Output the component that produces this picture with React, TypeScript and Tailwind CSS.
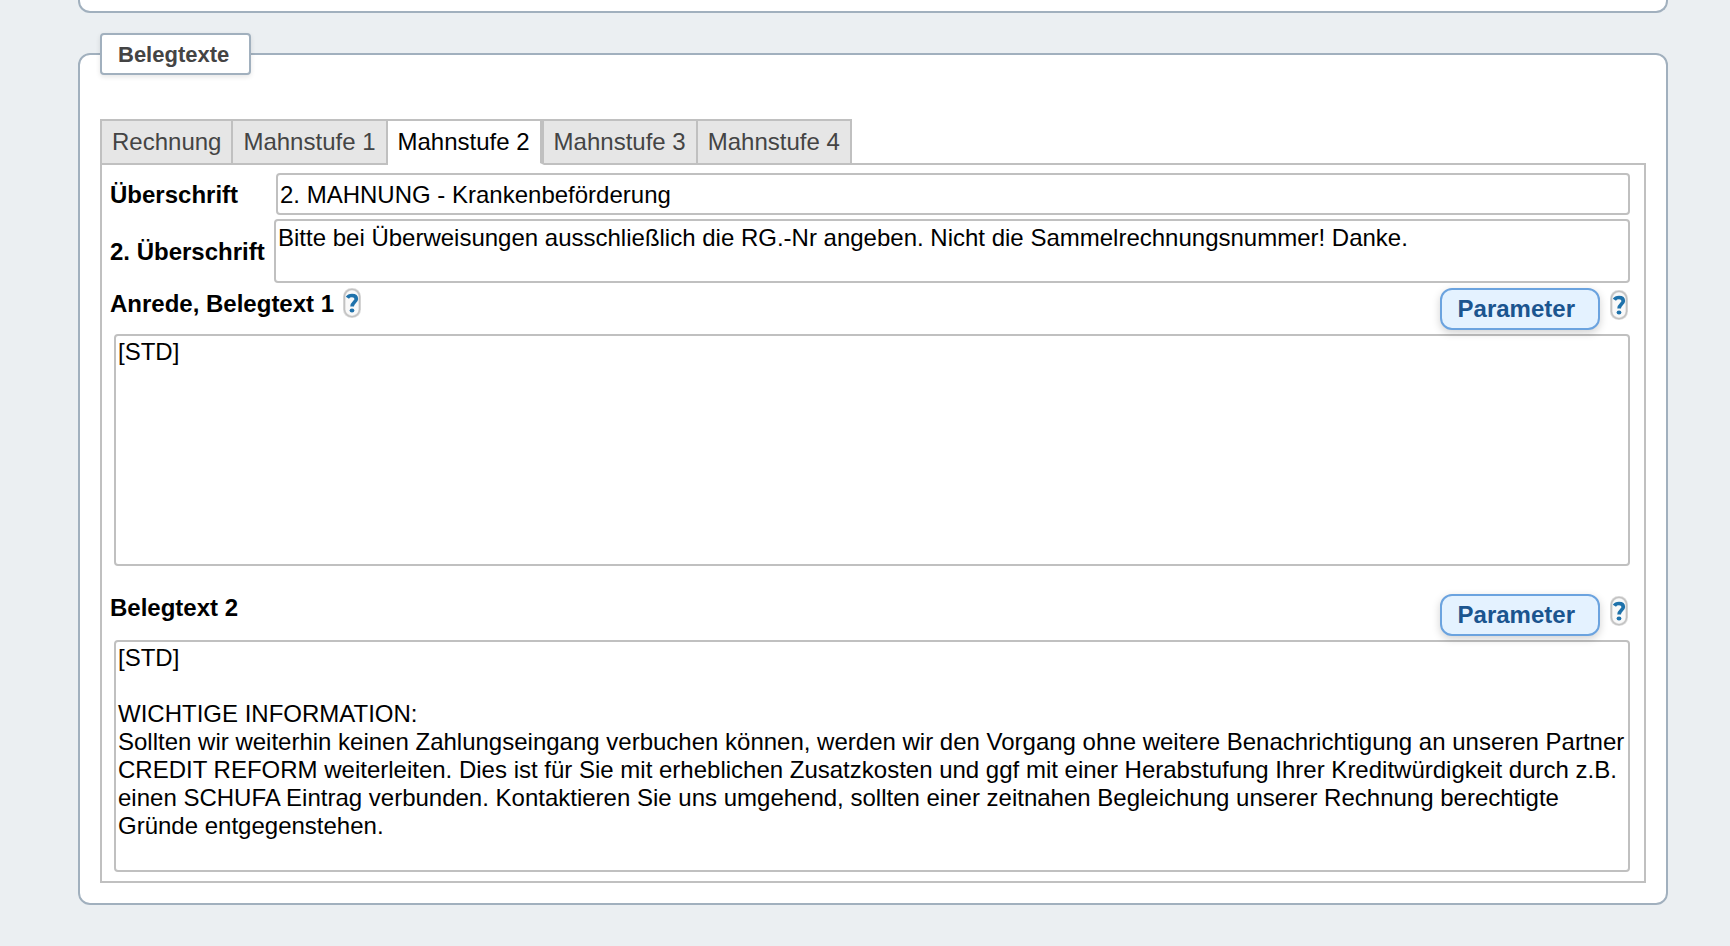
import { useState } from "react";

const TABS = ["Rechnung", "Mahnstufe 1", "Mahnstufe 2", "Mahnstufe 3", "Mahnstufe 4"];

const BELEGTEXT_2 = `[STD]

WICHTIGE INFORMATION:
Sollten wir weiterhin keinen Zahlungseingang verbuchen können, werden wir den Vorgang ohne weitere Benachrichtigung an unseren Partner CREDIT REFORM weiterleiten. Dies ist für Sie mit erheblichen Zusatzkosten und ggf mit einer Herabstufung Ihrer Kreditwürdigkeit durch z.B. einen SCHUFA Eintrag verbunden. Kontaktieren Sie uns umgehend, sollten einer zeitnahen Begleichung unserer Rechnung berechtigte Gründe entgegenstehen.`;

const field =
  "block rounded-[4px] border-2 border-[#c0c0c0] bg-white text-2xl leading-7 text-black";

function HelpButton() {
  return (
    <button type="button" aria-label="Hilfe" className="block h-[30px] w-[18px] shrink-0">
      <svg viewBox="0 0 18 30" className="block h-[30px] w-[18px]" aria-hidden="true">
        <rect x="0" y="0" width="18" height="30" rx="8.5" fill="#dcdcdc" />
        <rect x="1.4" y="1.4" width="15.2" height="27.2" rx="7.4" fill="none" stroke="#c2c2c2" strokeWidth="1.4" />
        <rect x="2.6" y="2.6" width="12.8" height="24.8" rx="6.2" fill="#f9f9f9" />
        <path
          d="M4.4 9.7C5.3 8.2 6.9 7.5 9 7.5C11.8 7.5 13.3 8.9 13.3 11C13.3 14 9.1 14.2 9.1 18.6"
          fill="none"
          stroke="#1f72ab"
          strokeWidth="3.7"
        />
        <ellipse cx="9" cy="22.6" rx="2.4" ry="2" fill="#1f72ab" />
      </svg>
    </button>
  );
}

function ParameterButtons() {
  return (
    <div className="relative flex items-start gap-2.5 pr-0.5">
      <button
        type="button"
        className="h-[42px] rounded-[12px] border-2 border-[#6ba3df] bg-[#e4f2ff] pr-[23px] pl-4 text-2xl leading-7 font-bold text-[#1b558f] shadow-[0_3px_8px_rgba(0,0,0,0.18)]"
      >
        Parameter
      </button>
      <div className="pt-0.5">
        <HelpButton />
      </div>
    </div>
  );
}

export default function App() {
  const [active, setActive] = useState("Mahnstufe 2");

  return (
    <main className="min-h-screen bg-[#ebeff2] pr-[62px] pb-8 pl-[78px] font-['Liberation_Sans',Arial,sans-serif] text-black">
      <section className="h-[13px] rounded-b-[12px] border-2 border-t-0 border-[#a1b0be] bg-white" />

      <fieldset className="mt-5 rounded-[12px] border-2 border-[#a1b0be] bg-white px-5 pb-5">
        <legend className="rounded-[4px] border-2 border-[#a1b0be] bg-white pt-1.5 pr-5 pb-1 pl-4 text-[22px] leading-7 font-bold text-[#444444] shadow-[0_2px_5px_rgba(0,0,0,0.1)]">
          Belegtexte
        </legend>

        <div role="tablist" className="relative mt-11 -mb-0.5 flex">
          {TABS.map((tab) => (
            <button
              key={tab}
              type="button"
              role="tab"
              aria-selected={tab === active}
              onClick={() => setActive(tab)}
              className={
                tab === active
                  ? "h-[46px] border-y-2 border-r-4 border-[#c0c0c0] border-b-white bg-white px-2.5 text-2xl leading-7 text-black first:border-l-2"
                  : "h-[46px] border-y-2 border-r-2 border-[#c0c0c0] bg-[#e6e6e6] px-2.5 text-2xl leading-7 text-[#444444] first:border-l-2"
              }
            >
              {tab}
            </button>
          ))}
        </div>

        <div role="tabpanel" className="border-2 border-[#c0c0c0] px-2 pt-2 pb-[9px]">
          <div className="flex items-center pr-1.5">
            <label htmlFor="heading" className="w-[164px] shrink-0 pt-0.5 text-2xl leading-7 font-bold">
              Überschrift
            </label>
            <input
              id="heading"
              type="text"
              defaultValue="2. MAHNUNG - Krankenbeförderung"
              className={`${field} ml-0.5 h-[42px] min-w-0 flex-1 px-0.5 pt-0.5`}
            />
          </div>

          <div className="mt-1 flex items-center pr-1.5">
            <label htmlFor="heading2" className="w-[164px] shrink-0 pt-0.5 text-2xl leading-7 font-bold">
              2. Überschrift
            </label>
            <textarea
              id="heading2"
              defaultValue="Bitte bei Überweisungen ausschließlich die RG.-Nr angeben. Nicht die Sammelrechnungsnummer! Danke."
              className={`${field} h-16 min-w-0 flex-1 resize-none px-0.5 pt-[3px]`}
            />
          </div>

          <div className="mt-[5px] flex items-start justify-between pr-1.5">
            <div className="flex items-start gap-[9px]">
              <label htmlFor="text1" className="pt-0.5 text-2xl leading-7 font-bold">
                Anrede, Belegtext 1
              </label>
              <HelpButton />
            </div>
            <ParameterButtons />
          </div>
          <div className="mt-1 pr-1.5 pl-1">
            <textarea
              id="text1"
              defaultValue="[STD]"
              className={`${field} h-[232px] w-full resize-none p-0.5`}
            />
          </div>

          <div className="mt-7 flex items-start justify-between pr-1.5">
            <label htmlFor="text2" className="text-2xl leading-7 font-bold">
              Belegtext 2
            </label>
            <ParameterButtons />
          </div>
          <div className="mt-1 pr-1.5 pl-1">
            <textarea
              id="text2"
              defaultValue={BELEGTEXT_2}
              className={`${field} h-[232px] w-full resize-none p-0.5`}
            />
          </div>
        </div>
      </fieldset>
    </main>
  );
}
